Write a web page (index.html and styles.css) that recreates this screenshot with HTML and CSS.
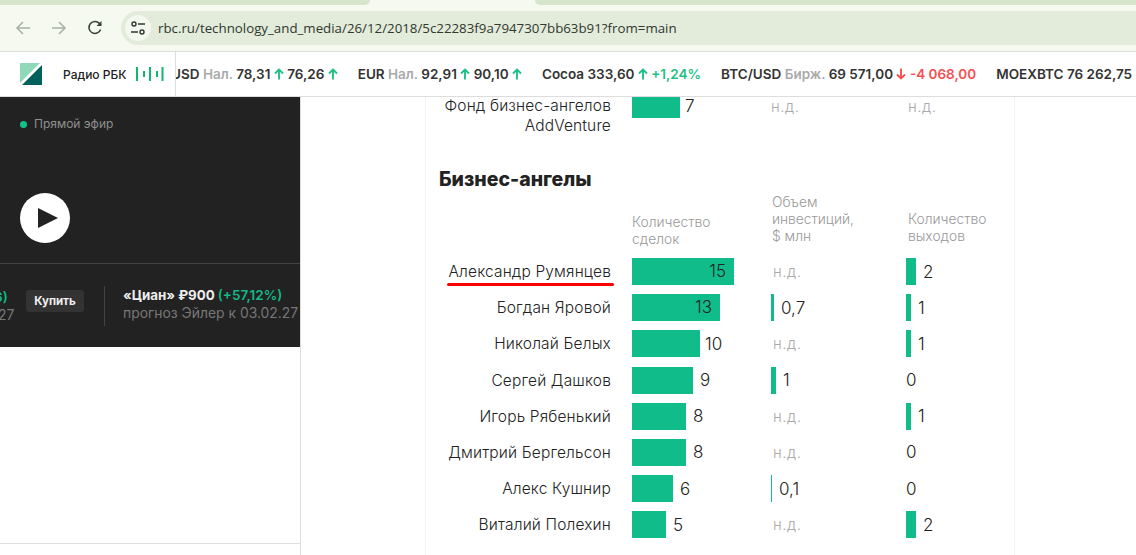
FILE: index.html
```html
<!DOCTYPE html>
<html lang="ru">
<head>
<meta charset="utf-8">
<title>РБК</title>
<link rel="stylesheet" href="styles.css">
</head>
<body>
<svg class="defs" width="0" height="0" aria-hidden="true">
  <symbol id="up" viewBox="0 0 10 12"><path d="M5 11.5V1.5M1 5.5l4-4 4 4" fill="none" stroke="currentColor" stroke-width="1.9"/></symbol>
  <symbol id="down" viewBox="0 0 10 12"><path d="M5 .5v10M1 6.5l4 4 4-4" fill="none" stroke="currentColor" stroke-width="1.9"/></symbol>
</svg>
<div class="tabstrip"><div class="strip-a"></div><div class="strip-tab"></div><div class="strip-b"></div></div>
<header class="toolbar">
  <svg class="nav" viewBox="0 0 16 16"><path d="M15 8H2M8 2L2 8l6 6" fill="none" stroke="#a9b0a6" stroke-width="1.5"/></svg>
  <svg class="nav" viewBox="0 0 16 16"><path d="M1 8h13M8 2l6 6-6 6" fill="none" stroke="#a9b0a6" stroke-width="1.5"/></svg>
  <svg class="nav" viewBox="0 0 16 16"><path d="M13.6 9.5A6 6 0 1 1 12.4 3.4L14 5" fill="none" stroke="#3b463b" stroke-width="1.6"/><path d="M14.5 1v5h-5z" fill="#3b463b"/></svg>
  <div class="urlbar">
    <span class="site-info"><svg viewBox="0 0 16 16" width="16" height="16"><circle cx="4" cy="4" r="2" fill="none" stroke="#2f382f" stroke-width="1.4"/><path d="M8 4h7M1 12h7" stroke="#2f382f" stroke-width="1.4"/><circle cx="12" cy="12" r="2" fill="none" stroke="#2f382f" stroke-width="1.4"/></svg></span>
    <span class="url">rbc.ru/technology_and_media/26/12/2018/5c22283f9a7947307bb63b91?from=main</span>
  </div>
</header>
<section class="ticker">
  <div class="radio">
    <svg class="logo" viewBox="0 0 22 22"><path d="M0 0h20L0 20z" fill="#8fd9b8"/><path d="M22 2v20H2z" fill="#00605c"/></svg>
    <span class="radio-name">Радио РБК</span>
    <svg class="eq" viewBox="0 0 28 14"><path d="M1 0v14M8 4v6M14 0v14M21 4v6M26.5 0v14" stroke="#12b76f" stroke-width="2" fill="none"/></svg>
  </div>
  <div class="quotes">
    <span class="quote first">USD <i>Нал.</i> 78,31 <svg class="ar up"><use href="#up"/></svg> 76,26 <svg class="ar up"><use href="#up"/></svg></span>
    <span class="quote">EUR <i>Нал.</i> 92,91 <svg class="ar up"><use href="#up"/></svg> 90,10 <svg class="ar up"><use href="#up"/></svg></span>
    <span class="quote">Cocoa 333,60 <svg class="ar up"><use href="#up"/></svg> <b>+1,24%</b></span>
    <span class="quote">BTC/USD <i>Бирж.</i> 69 571,00 <svg class="ar down"><use href="#down"/></svg> <em>-4 068,00</em></span>
    <span class="quote">MOEXBTC 76 262,75</span>
  </div>
</section>
<div class="page">
  <aside class="side">
    <div class="player">
      <div class="live"><span class="dot"></span>Прямой эфир</div>
      <div class="play"><svg viewBox="0 0 20 20" width="20" height="20"><path d="M0 0l20 10L0 20z" fill="#222"/></svg></div>
      <div class="promo">
        <div class="promo-left"><span class="pct cut-a">6)</span><span class="fore cut-b">27</span></div>
        <span class="buy">Купить</span>
        <div class="promo-item"><div class="promo-title">«Циан» ₽900 <span class="pct">(+57,12%)</span></div><div class="fore">прогноз Эйлер к 03.02.27</div></div>
      </div>
    </div>
    <div class="side-line"></div>
  </aside>
  <main class="article">
    <div class="row top">
      <div class="name">Фонд бизнес-ангелов<br>AddVenture</div>
      <div class="cell"><span class="bar" style="width:48px"></span><span class="val tight lowered">7</span></div>
      <div class="cell"><span class="nd lowered flush">н.д.</span></div>
      <div class="cell"><span class="nd lowered">н.д.</span></div>
    </div>
    <h2 class="title">Бизнес-ангелы</h2>
    <div class="heads">
      <div></div>
      <div>Количество<br>сделок</div>
      <div class="raised">Объем<br>инвестиций,<br>$ млн</div>
      <div class="raised shift">Количество<br>выходов</div>
    </div>
    <div class="row">
      <div class="name marked">Александр Румянцев</div>
      <div class="cell"><span class="bar inner" style="width:102px">15</span></div>
      <div class="cell"><span class="nd">н.д.</span></div>
      <div class="cell"><span class="bar" style="width:10px"></span><span class="val">2</span></div>
    </div>
    <div class="row">
      <div class="name">Богдан Яровой</div>
      <div class="cell"><span class="bar inner" style="width:88px">13</span></div>
      <div class="cell"><span class="bar" style="width:3px"></span><span class="val">0,7</span></div>
      <div class="cell"><span class="bar" style="width:5px"></span><span class="val">1</span></div>
    </div>
    <div class="row">
      <div class="name">Николай Белых</div>
      <div class="cell"><span class="bar" style="width:68px"></span><span class="val tight">10</span></div>
      <div class="cell"><span class="nd">н.д.</span></div>
      <div class="cell"><span class="bar" style="width:5px"></span><span class="val">1</span></div>
    </div>
    <div class="row">
      <div class="name">Сергей Дашков</div>
      <div class="cell"><span class="bar" style="width:61px"></span><span class="val">9</span></div>
      <div class="cell"><span class="bar" style="width:5px"></span><span class="val">1</span></div>
      <div class="cell"><span class="zero">0</span></div>
    </div>
    <div class="row">
      <div class="name">Игорь Рябенький</div>
      <div class="cell"><span class="bar" style="width:54px"></span><span class="val">8</span></div>
      <div class="cell"><span class="nd">н.д.</span></div>
      <div class="cell"><span class="bar" style="width:5px"></span><span class="val">1</span></div>
    </div>
    <div class="row">
      <div class="name">Дмитрий Бергельсон</div>
      <div class="cell"><span class="bar" style="width:54px"></span><span class="val">8</span></div>
      <div class="cell"><span class="nd">н.д.</span></div>
      <div class="cell"><span class="zero">0</span></div>
    </div>
    <div class="row">
      <div class="name">Алекс Кушнир</div>
      <div class="cell"><span class="bar" style="width:41px"></span><span class="val">6</span></div>
      <div class="cell"><span class="bar" style="width:1px"></span><span class="val">0,1</span></div>
      <div class="cell"><span class="zero">0</span></div>
    </div>
    <div class="row">
      <div class="name">Виталий Полехин</div>
      <div class="cell"><span class="bar" style="width:34px"></span><span class="val">5</span></div>
      <div class="cell"><span class="nd">н.д.</span></div>
      <div class="cell"><span class="bar" style="width:10px"></span><span class="val">2</span></div>
    </div>
  </main>
</div>
</body>
</html>
```
FILE: styles.css
```css
* { box-sizing: border-box; }
html, body { margin: 0; height: 555px; overflow: hidden; background: #fff; }
body { font-family: Inter, "Liberation Sans", sans-serif; color: #222; display: flex; flex-direction: column; }
.defs { position: absolute; }

.tabstrip { height: 5px; display: flex; background: #f6f9ef; flex: none; }
.strip-a { width: 370px; background: #d6e5cb; border-bottom-right-radius: 5px; }
.strip-tab { width: 165px; }
.strip-b { flex: 1; background: #d6e5cb; border-bottom-left-radius: 5px; }

.toolbar { height: 47px; flex: none; background: #f6f9ef; border-bottom: 1px solid #dcdfd8; display: flex; align-items: center; padding: 0 0 0 15px; }
.nav { width: 16px; height: 16px; flex: none; margin-right: 20px; }
.urlbar { margin-left: -2px; flex: 1; height: 34px; border-radius: 17px 0 0 17px; background: #e3ebda; display: flex; align-items: center; padding-left: 4px; }
.site-info { width: 26px; height: 26px; border-radius: 50%; background: #f5f8ef; display: flex; align-items: center; justify-content: center; }
.url { margin-left: 7px; font: 13.3px "Open Sans", sans-serif; color: #303830; white-space: nowrap; }

.ticker { height: 45px; flex: none; background: #fff; border-bottom: 1px solid #ddd; display: flex; overflow: hidden; }
.radio { width: 176px; flex: none; border-right: 1px solid #ddd; display: flex; align-items: center; padding-left: 20px; }
.logo { width: 22px; height: 22px; flex: none; }
.radio-name { margin-left: 21px; font-size: 12px; font-weight: 500; color: #222; white-space: nowrap; }
.eq { width: 28px; height: 14px; margin-left: 9px; flex: none; }
.quotes { display: flex; gap: 20px; align-items: center; flex: 1; min-width: 0; overflow: hidden; font-size: 13.5px; font-weight: 600; color: #333; white-space: nowrap; }
.quote { flex: none; }
.quote.first { margin-left: -5px; }
.quote i { font-style: normal; color: #aaa; }
.quote b { font-weight: 600; color: #1fbf88; }
.quote em { font-style: normal; color: #f55050; }
.ar { width: 10px; height: 12px; vertical-align: -1px; }
.ar.up { color: #1fbf88; }
.ar.down { color: #f55050; }

.page { flex: 1; display: flex; min-height: 0; overflow: hidden; }
.side { width: 301px; flex: none; border-right: 1px solid #ddd; display: flex; flex-direction: column; }
.player { height: 250px; flex: none; background: #222; display: flex; flex-direction: column; }
.live { display: flex; align-items: center; margin: 20px 0 0 20px; font-size: 12px; line-height: 14px; color: #8f8f8f; }
.dot { width: 7px; height: 7px; border-radius: 50%; background: #12c08a; margin-right: 7px; }
.play { width: 50px; height: 50px; margin: 62px 0 0 20px; border-radius: 50%; background: #fff; display: flex; align-items: center; justify-content: center; padding-left: 6px; }
.promo { margin-top: 20px; height: 84px; border-top: 1px solid #444; display: flex; align-items: center; font-size: 14px; }
.promo-left { width: 26px; flex: none; display: flex; flex-direction: column; align-items: flex-start; line-height: 18px; }
.cut-a { margin-left: -6px; }
.cut-b { margin-left: -2px; }
.buy { width: 58px; height: 22px; margin-top: -10px; border-radius: 3px; background: #333; color: #eee; font-size: 11.5px; font-weight: 700; display: flex; align-items: center; justify-content: center; flex: none; }
.promo-item { margin-left: 20px; height: 40px; padding-left: 18px; border-left: 1px solid #444; white-space: nowrap; line-height: 18px; }
.promo-title { color: #eee; font-size: 13.3px; font-weight: 700; }
.pct { color: #12b886; font-weight: 600; font-size: 13.5px; }
.fore { color: #777; font-size: 13.9px; }
.side-line { margin-top: 196px; border-top: 1px solid #ddd; }

.article { width: 590px; margin-left: 124px; flex: none; border-left: 1px solid #f4f4f4; border-right: 1px solid #f4f4f4; }
.row { display: grid; grid-template-columns: 206px 139px 135px 1fr; height: 36.2px; align-items: start; }
.row.top { height: auto; margin-top: -6px; }
.name { padding-right: 21px; padding-top: 4px; text-align: right; font-size: 15.5px; font-weight: 300; line-height: 20px; color: #222; letter-spacing: .15px; position: relative; white-space: nowrap; }
.row.top .name { padding-top: 5px; }
.marked::after { content: ""; position: absolute; left: 21px; right: 18px; top: 25px; height: 3px; border-radius: 2px; background: #f00; }
.cell { display: flex; align-items: center; height: 27px; font-size: 17px; font-weight: 300; color: #222; }
.bar { height: 27px; background: #10bd8a; flex: none; display: block; }
.bar.inner { text-align: right; padding-right: 8px; line-height: 27px; }
.val { margin-left: 7px; }
.val.tight { margin-left: 5px; }
.val.lowered { margin-top: 2px; }
.zero { display: block; }
.nd { margin-left: 2px; font-size: 15px; letter-spacing: .5px; color: #aaa; }
.nd.flush { margin-left: 0; }
.nd.lowered { margin-top: 4px; }

.title { margin: 31px 0 0 13px; font-size: 19.5px; line-height: 24px; font-weight: 800; color: #222; }
.heads { display: grid; grid-template-columns: 206px 139px 135px 1fr; align-items: end; margin: 3px 0 10px; font-size: 13.8px; font-weight: 300; line-height: 17px; color: #999; }
.raised { padding-bottom: 3px; padding-left: 1px; }
.raised.shift { padding-left: 2px; }
```
